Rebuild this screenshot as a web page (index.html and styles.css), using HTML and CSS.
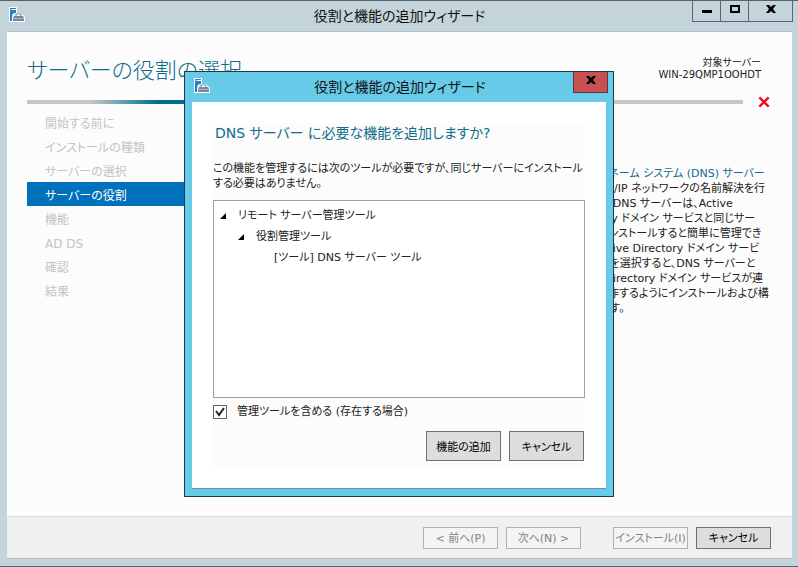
FILE: index.html
```html
<!DOCTYPE html>
<html lang="ja">
  <head>
    <meta charset="UTF-8" />
    <title>役割と機能の追加ウィザード</title>
    <link rel="stylesheet" href="styles.css">
  </head>

  <body>
    <svg class="symbols">
      <symbol id="server-icon" viewBox="0 0 16 16">
        <path d="M0 0h8v6H6L3 9v6H0z" fill="#fff" />
        <path d="M1 1h6v1H1zM1 3h6v3H5L3 8v6H1z" fill="#2680c4" />
        <path d="M1 2h2v1H1z" fill="#8cc3e6" />
        <path d="M3 10l3-3 1-1h5l1 1 3 3v5H3z" fill="#fff" />
        <path d="M5 9h9l1 2H4zM4 12h11v2H4z" fill="#77889d" />
        <path d="M4 11h11v1H4z" fill="#aab5c2" />
        <path d="M7 9V7h5v2" fill="none" stroke="#77889d" />
      </symbol>
    </svg>

    <div class="window">
      <header class="title-bar">
        <svg class="app-icon"><use href="#server-icon" /></svg>
        <div class="title">役割と機能の追加ウィザード</div>
        <div class="window-controls">
          <button aria-label="最小化">
            <svg width="12" height="12"><path d="M1 7h10v3H1z" /></svg>
          </button>
          <button aria-label="最大化">
            <svg width="12" height="12"><path fill-rule="evenodd" d="M1 2h10v8H1zM3 4h6v4H3z" /></svg>
          </button>
          <button class="close" aria-label="閉じる">
            <svg width="12" height="12"><path d="M1 2h3l2 2 2-2h3L8 6l3 4H8L6 8l-2 2H1l3-4z" /></svg>
          </button>
        </div>
      </header>

      <main class="page">
        <div class="page-header">
          <h1>サーバーの役割の選択</h1>
          <p class="target">対象サーバー<br>WIN-29QMP1OOHDT</p>
        </div>
        <div class="progress">
          <div class="progress-line"></div>
          <svg class="error-icon" viewBox="0 0 12 12"><path d="M2 2l8 8M10 2l-8 8" /></svg>
        </div>
        <div class="columns">
          <nav class="steps">
            <a href="#">開始する前に</a>
            <a href="#">インストールの種類</a>
            <a href="#">サーバーの選択</a>
            <a href="#" class="active">サーバーの役割</a>
            <a href="#">機能</a>
            <a href="#">AD DS</a>
            <a href="#">確認</a>
            <a href="#">結果</a>
          </nav>
          <p class="description">
            <a href="#">ドメイン ネーム システム (DNS) サーバー</a><br>
            では、TCP/IP ネットワークの名前解決を行<br>
            ないます。DNS サーバーは、Active<br>
            Directory ドメイン サービスと同じサー<br>
            バーにインストールすると簡単に管理でき<br>
            ます。 Active Directory ドメイン サービ<br>
            スの役割を選択すると、DNS サーバーと<br>
            Active Directory ドメイン サービスが連<br>
            携して動作するようにインストールおよび構<br>
            成可能です。
          </p>
        </div>
      </main>

      <footer class="footer">
        <div class="button-group">
          <button disabled>&lt; 前へ(P)</button>
          <button disabled>次へ(N) &gt;</button>
        </div>
        <div class="button-group">
          <button disabled>インストール(I)</button>
          <button>キャンセル</button>
        </div>
      </footer>
    </div>

    <div class="overlay">
      <div class="dialog" role="dialog" aria-labelledby="dialog-title">
        <header class="title-bar">
          <svg class="app-icon"><use href="#server-icon" /></svg>
          <div class="title" id="dialog-title">役割と機能の追加ウィザード</div>
          <button class="dialog-close" aria-label="閉じる">
            <svg width="12" height="12"><path d="M1 2h3l2 2 2-2h3L8 6l3 4H8L6 8l-2 2H1l3-4z" /></svg>
          </button>
        </header>
        <div class="dialog-body">
          <div class="dialog-panel">
            <h2>DNS サーバー に必要な機能を追加しますか?</h2>
            <p class="intro">この機能を管理するには次のツールが必要ですが、同じサーバーにインストール<br>する必要はありません。</p>
            <ul class="tree">
              <li>
                <span class="node"><svg class="arrow" viewBox="0 0 8 8"><path d="M7 1v6H1z" /></svg>リモート サーバー管理ツール</span>
                <ul>
                  <li>
                    <span class="node"><svg class="arrow" viewBox="0 0 8 8"><path d="M7 1v6H1z" /></svg>役割管理ツール</span>
                    <ul>
                      <li><span class="node leaf">[ツール] DNS サーバー ツール</span></li>
                    </ul>
                  </li>
                </ul>
              </li>
            </ul>
            <label class="include">
              <input type="checkbox" checked>
              管理ツールを含める (存在する場合)
            </label>
            <div class="dialog-buttons">
              <button>機能の追加</button>
              <button>キャンセル</button>
            </div>
          </div>
        </div>
      </div>
    </div>
  </body>
</html>
```
FILE: styles.css
```css
* {
  box-sizing: border-box;
}

body {
  margin: 0;
  font-family: "DejaVu Sans", "Noto Sans CJK JP", sans-serif;
  font-feature-settings: "palt";
  font-size: 11px;
  line-height: 15px;
  color: #222;
}

h1,
h2,
p,
ul {
  margin: 0;
  padding: 0;
  font-weight: normal;
}

a {
  color: inherit;
  text-decoration: none;
}

button {
  font: inherit;
  font-feature-settings: inherit;
  color: #000;
  padding: 0;
  white-space: nowrap;
}

.symbols {
  position: absolute;
  width: 0;
  height: 0;
}

.window {
  min-height: 100vh;
  display: flex;
  flex-direction: column;
  padding: 0 6px 7px 7px;
  background: #c3d4da;
  border-top: 1px solid #5b626d;
  border-bottom: 1px solid #5b626d;
}

.title-bar {
  display: grid;
  grid-template-columns: 100px 1fr 100px;
  height: 30px;
}

.app-icon {
  width: 16px;
  height: 16px;
  margin: 6px 2px;
}

.title {
  text-align: center;
  font-size: 14px;
  line-height: 31px;
  color: #111;
}

.window-controls {
  display: flex;
  justify-self: end;
  height: 21px;
  margin-right: -1px;
}

.window-controls button {
  width: 28px;
  background: none;
  border: 1px solid #5b6470;
  border-top: none;
  border-right: none;
}

.window-controls .close {
  width: 45px;
  border-right: 1px solid #5b6470;
}

.page {
  flex: 1;
  padding: 19px 21px 0 20px;
  background: #fcfcfc;
  border-top: 1px solid #b3c0cb;
}

.page-header {
  display: flex;
  justify-content: space-between;
  height: 47px;
}

h1 {
  font-size: 22px;
  line-height: 40px;
  font-weight: 300;
  color: #116c8c;
}

.target {
  margin: 6px 10px 0 0;
  font-size: 10px;
  line-height: 12px;
  text-align: right;
}

.progress {
  display: flex;
  align-items: center;
  gap: 14px;
  height: 8px;
}

.progress-line {
  flex: 1;
  height: 4px;
  background: linear-gradient(90deg, #c6c6c6 9%, #00708f 18%, #00708f 50%, #c6c6c6 80%);
}

.error-icon {
  width: 14px;
  height: 14px;
  fill: none;
  stroke: #e81123;
  stroke-width: 2;
}

.columns {
  display: flex;
  justify-content: space-between;
  padding-top: 4px;
}

.steps {
  width: 165px;
}

.steps a {
  display: block;
  padding: 4px 0 0 18px;
  font-size: 12px;
  line-height: 20px;
  color: #c4c4c4;
}

.steps .active {
  background: #0072bc;
  color: #fff;
}

.description {
  width: 204px;
  padding-top: 56px;
  white-space: nowrap;
}

.description a {
  color: #116c8c;
}

.footer {
  display: flex;
  justify-content: flex-end;
  gap: 32px;
  height: 43px;
  padding: 10px 21px 0 0;
  background: #f0f0f0;
  border-top: 1px solid #d9dbdd;
  border-bottom: 1px solid #b3bcc4;
}

.button-group,
.dialog-buttons {
  display: flex;
  gap: 8px;
}

.footer button {
  width: 75px;
  height: 22px;
  background: #dddddd;
  border: 1px solid #707070;
}

.footer button:disabled {
  background: #f4f4f4;
  border-color: #adb2b5;
  color: #838383;
}

.overlay {
  position: absolute;
  inset: 0;
  display: flex;
  align-items: center;
  justify-content: center;
  padding-top: 1px;
}

.dialog {
  width: 430px;
  padding: 0 7px 7px;
  background: #67cae9;
  border: 1px solid #1d3a48;
}

.dialog-close {
  justify-self: end;
  width: 35px;
  height: 21px;
  background: #c75050;
  border: 1px solid #5b3740;
  border-top: none;
}

.dialog .title-bar {
  margin-right: -2px;
}

.dialog-body {
  padding: 21px;
  background: #fff;
  border-bottom: 1px solid #6c8fa6;
}

.dialog-panel {
  padding-bottom: 6px;
  background: #fcfcfc;
}

h2 {
  padding-left: 2px;
  font-size: 14px;
  line-height: 20px;
  color: #116c8c;
}

.intro {
  margin: 18px 0 9px;
  white-space: nowrap;
}

.tree {
  height: 198px;
  padding: 4px 5px;
  background: #fff;
  border: 1px solid #a0a0a0;
  list-style: none;
}

.tree ul {
  padding-left: 18px;
  list-style: none;
}

.node {
  display: flex;
  align-items: center;
  gap: 11px;
  line-height: 21px;
}

.node.leaf {
  padding-left: 19px;
}

.arrow {
  width: 8px;
  height: 8px;
}

.include {
  display: flex;
  align-items: center;
  gap: 10px;
  height: 27px;
}

.include input {
  appearance: none;
  width: 14px;
  height: 14px;
  margin: 0;
  background: #fff url("data:image/svg+xml,%3Csvg xmlns='http://www.w3.org/2000/svg' viewBox='0 0 12 12'%3E%3Cpath d='M2 5l3 4 5-7' fill='none' stroke='%23222' stroke-width='2'/%3E%3C/svg%3E");
  border: 1px solid #666;
}

.dialog-buttons {
  justify-content: flex-end;
  padding: 6px 1px 0 0;
}

.dialog-buttons button {
  width: 75px;
  height: 30px;
  padding-top: 2px;
  background: #dddddd;
  border: 1px solid #707070;
}
```
